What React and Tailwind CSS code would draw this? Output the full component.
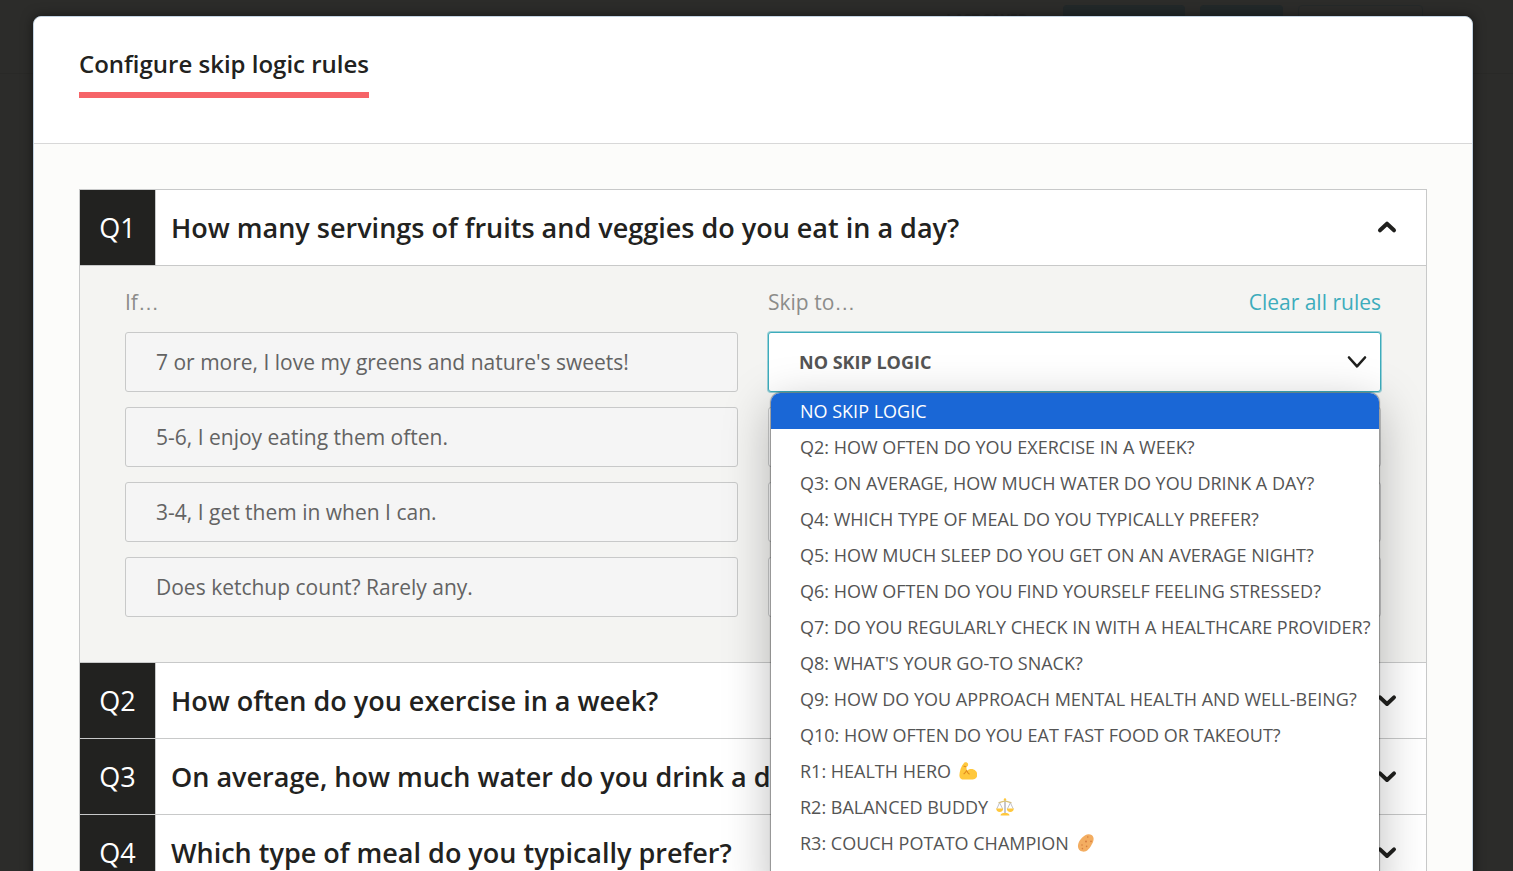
import React from "react";
import { useState } from "react";

const questions = [
  "How many servings of fruits and veggies do you eat in a day?",
  "How often do you exercise in a week?",
  "On average, how much water do you drink a day?",
  "Which type of meal do you typically prefer?",
  "How much sleep do you get on an average night?",
];

const answers = [
  "7 or more, I love my greens and nature's sweets!",
  "5-6, I enjoy eating them often.",
  "3-4, I get them in when I can.",
  "Does ketchup count? Rarely any.",
];

const skipOptions = [
  { label: "No skip logic" },
  { label: "Q2: How often do you exercise in a week?" },
  { label: "Q3: On average, how much water do you drink a day?" },
  { label: "Q4: Which type of meal do you typically prefer?" },
  { label: "Q5: How much sleep do you get on an average night?" },
  { label: "Q6: How often do you find yourself feeling stressed?" },
  { label: "Q7: Do you regularly check in with a healthcare provider?" },
  { label: "Q8: What's your go-to snack?" },
  { label: "Q9: How do you approach mental health and well-being?" },
  { label: "Q10: How often do you eat fast food or takeout?" },
  { label: "R1: Health Hero", icon: "muscle" },
  { label: "R2: Balanced Buddy", icon: "scales" },
  { label: "R3: Couch Potato Champion", icon: "potato" },
];

const icons = {
  muscle: (
    <>
      <path
        d="M5.2 0.8C6.6-0.1 8.8 0.4 9.1 2.2C9.4 4 8.4 4.6 7.2 4.7L8 9C9.5 7.2 12.2 6.6 14.6 7.6C17.2 8.6 18.6 11 18.2 13.6C17.8 16.6 15 17.6 11.6 17.6H5C2 17.6 0.3 15.8 0.4 13.2C0.6 9.6 2 4 5.2 0.8Z"
        fill="#ffc83d"
      />
      <path
        d="M7 4.8L5 4.2M7.6 8.6C6.8 10 6.2 11 5 11.8M8 9C8.4 10.4 9 11.4 10.2 12"
        fill="none"
        stroke="#e08a1e"
        strokeWidth="1.1"
        strokeLinecap="round"
      />
    </>
  ),
  scales: (
    <>
      <path d="M8.2 1.5H9.8V15H8.2Z" fill="#b9b9c0" />
      <path
        d="M2.5 4.6C5 4.8 6 3.2 9 3.2S13 4.8 15.5 4.6"
        fill="none"
        stroke="#d9c27a"
        strokeWidth="1.3"
      />
      <path
        d="M3.6 4.8L0.8 10.8M3.6 4.8L6.6 10.8M14.4 4.8L11.4 10.8M14.4 4.8L17.2 10.8"
        stroke="#b9b9c0"
        strokeWidth="0.9"
      />
      <path
        d="M0.2 10.5H7.2C7.2 12.8 5.8 14 3.7 14S0.2 12.8 0.2 10.5ZM10.8 10.5H17.8C17.8 12.8 16.4 14 14.3 14S10.8 12.8 10.8 10.5ZM4.5 17.6C4.5 15.6 6.5 15 9 15S13.5 15.6 13.5 17.6Z"
        fill="#ffc83d"
      />
      <circle cx="9" cy="1.4" r="1.2" fill="#ffc83d" />
    </>
  ),
  potato: (
    <>
      <path
        d="M8.2 1.2C11.2-0.4 15.6 0.2 16.4 3.4C17.2 6.6 15.6 9.4 13.8 12.2C12 15 9.6 18 5.8 17.6C2 17.2 0.6 14.4 1 11.4C1.4 7.4 4.4 3.4 8.2 1.2Z"
        fill="#f3ad61"
      />
      <g fill="#d67d3e">
        <circle cx="10.8" cy="3" r="0.8" />
        <circle cx="9" cy="7.6" r="1" />
        <circle cx="14" cy="7.4" r="0.8" />
        <circle cx="5" cy="11" r="0.8" />
        <circle cx="9.6" cy="12.4" r="0.8" />
        <circle cx="5.4" cy="14.6" r="0.8" />
      </g>
    </>
  ),
};

const Chevron = ({ up, thin }) => (
  <svg
    viewBox="0 0 20 20"
    className="size-5 shrink-0 text-[#20201e]"
    fill="none"
    stroke="currentColor"
    strokeWidth={thin ? 2.6 : 4}
    strokeLinecap="round"
    strokeLinejoin="round"
    aria-hidden="true"
  >
    {thin ? (
      <path d="M2 5.5L10 14.3L18 5.5" />
    ) : (
      <path d={up ? "M3 12.3L10 5.7L17 12.3" : "M3 6.4L10 13L17 6.4"} />
    )}
  </svg>
);

const TopBar = () => (
  <div className="flex h-[74px] items-start justify-end gap-[15px] border-b border-[#292927] pt-[5px] pr-[90px] text-sm font-bold text-[#262625]">
    <span className="pt-1 pr-4">LAST SAVED:</span>
    <div className="h-11 w-[122px] rounded-sm bg-[#222829]" />
    <div className="h-11 w-[83px] rounded-sm bg-[#222829]" />
    <div className="h-11 w-[125px] rounded-sm border border-[#252929]" />
  </div>
);

const SkipSelect = ({ index, value, onChange, open }) => (
  <div className="relative">
    <select
      aria-label={`Skip to, answer ${index + 1}`}
      value={value}
      onChange={(e) => onChange(Number(e.target.value))}
      className={
        open
          ? "h-[60px] w-full appearance-none rounded-[3px] border border-[#3dacbc] bg-white pr-14 pl-[30px] text-lg font-bold text-[#545454] uppercase ring-1 ring-[#3dacbc]/50 outline-none"
          : "h-[60px] w-full appearance-none rounded-[3px] border border-[#c8c9c9] bg-white pr-14 pl-[30px] text-lg font-bold text-[#545454] uppercase outline-none"
      }
    >
      {skipOptions.map((option, i) => (
        <option key={option.label} value={i}>
          {option.label}
        </option>
      ))}
    </select>
    <div className="pointer-events-none absolute inset-y-0 right-[14px] flex items-center">
      <Chevron thin />
    </div>
    {open && (
      <ul
        role="listbox"
        aria-label="Skip to"
        className="absolute top-full right-[2px] left-[3px] z-10 mt-px overflow-hidden rounded-[9px] bg-white pb-9 text-lg leading-9 text-[#545454] uppercase shadow-[0_0_1px_1px_rgba(0,0,0,0.35),0_12px_48px_rgba(0,0,0,0.27)]"
      >
        {skipOptions.map((option, i) => (
          <li
            key={option.label}
            role="option"
            aria-selected={i === value}
            onClick={() => onChange(i)}
            className={
              i === value
                ? "flex h-9 items-center gap-2 bg-[#1a67d6] pl-[29px] whitespace-nowrap text-white"
                : "flex h-9 items-center gap-2 pl-[29px] whitespace-nowrap"
            }
          >
            {option.label}
            {option.icon && (
              <svg viewBox="0 0 18 18" className="size-[18px]" aria-hidden="true">
                {icons[option.icon]}
              </svg>
            )}
          </li>
        ))}
      </ul>
    )}
  </div>
);

const Dots = () => (
  <span className="font-['Liberation_Sans',sans-serif] leading-none">…</span>
);

const RulesPanel = () => {
  const [rules, setRules] = useState([0, 0, 0, 0]);
  const [openRow, setOpenRow] = useState(0);

  const setRule = (row, value) => {
    setRules(rules.map((r, i) => (i === row ? value : r)));
    setOpenRow(null);
  };

  return (
    <div className="grid grid-cols-2 gap-x-[30px] gap-y-[15px] border-b border-[#c8c9c9] bg-[#f4f4f2] px-[45px] pt-[21px] pb-[45px] text-[21px] leading-[30px]">
      <p className="text-[#8c8c8a]">
        If
        <Dots />
      </p>
      <div className="flex justify-between">
        <p className="text-[#8c8c8a]">
          Skip to
          <Dots />
        </p>
        <button
          type="button"
          className="text-[#3dacbc]"
          onClick={() => setRules([0, 0, 0, 0])}
        >
          Clear all rules
        </button>
      </div>
      {answers.map((answer, i) => (
        <React.Fragment key={answer}>
          <div className="flex h-[60px] items-center rounded-[3px] border border-[#c8c9c9] bg-[#f5f5f5] px-[30px] text-[#636363]">
            {answer}
          </div>
          <SkipSelect
            index={i}
            value={rules[i]}
            open={openRow === i}
            onChange={(value) => setRule(i, value)}
          />
        </React.Fragment>
      ))}
    </div>
  );
};

const App = () => {
  const [active, setActive] = useState(0);

  return (
    <div className="relative h-screen overflow-hidden bg-[#2c2c2a] font-['Open_Sans',sans-serif]">
      <TopBar />
      <div className="absolute inset-0 pt-4 pr-10 pl-[33px]">
        <div
          role="dialog"
          aria-labelledby="dialog-title"
          className="min-h-full rounded-lg border border-[#c3d3e2] bg-[#fcfcfa] shadow-[0_0_12px_rgba(0,0,0,0.5)]"
        >
          <header className="rounded-t-lg border-b border-[#d8d8d8] bg-white px-[45px] pt-[29px] pb-[45px]">
            <h1
              id="dialog-title"
              className="inline-block border-b-6 border-[#f66468] pb-[10px] align-top text-2xl leading-9 font-semibold text-[#222220]"
            >
              Configure skip logic rules
            </h1>
          </header>
          <main className="p-[45px]">
            <div className="border-x border-t border-[#c8c9c9]">
              {questions.map((question, i) => (
                <section key={question}>
                  <h2>
                    <button
                      type="button"
                      aria-expanded={active === i}
                      onClick={() => setActive(active === i ? null : i)}
                      className="flex h-[76px] w-full items-stretch border-b border-[#c8c9c9] bg-white text-left text-[27px] font-semibold text-[#222220]"
                    >
                      <span className="flex w-[76px] shrink-0 items-center justify-center border-r border-[#c8c9c9] bg-[#222220] pt-0.5 font-normal text-white">
                        Q{i + 1}
                      </span>
                      <span className="flex grow items-center justify-between pr-[29px] pl-[15px]">
                        <span className="pt-0.5">{question}</span>
                        <Chevron up={active === i} />
                      </span>
                    </button>
                  </h2>
                  {active === i && <RulesPanel />}
                </section>
              ))}
            </div>
          </main>
        </div>
      </div>
    </div>
  );
};

export default App;
